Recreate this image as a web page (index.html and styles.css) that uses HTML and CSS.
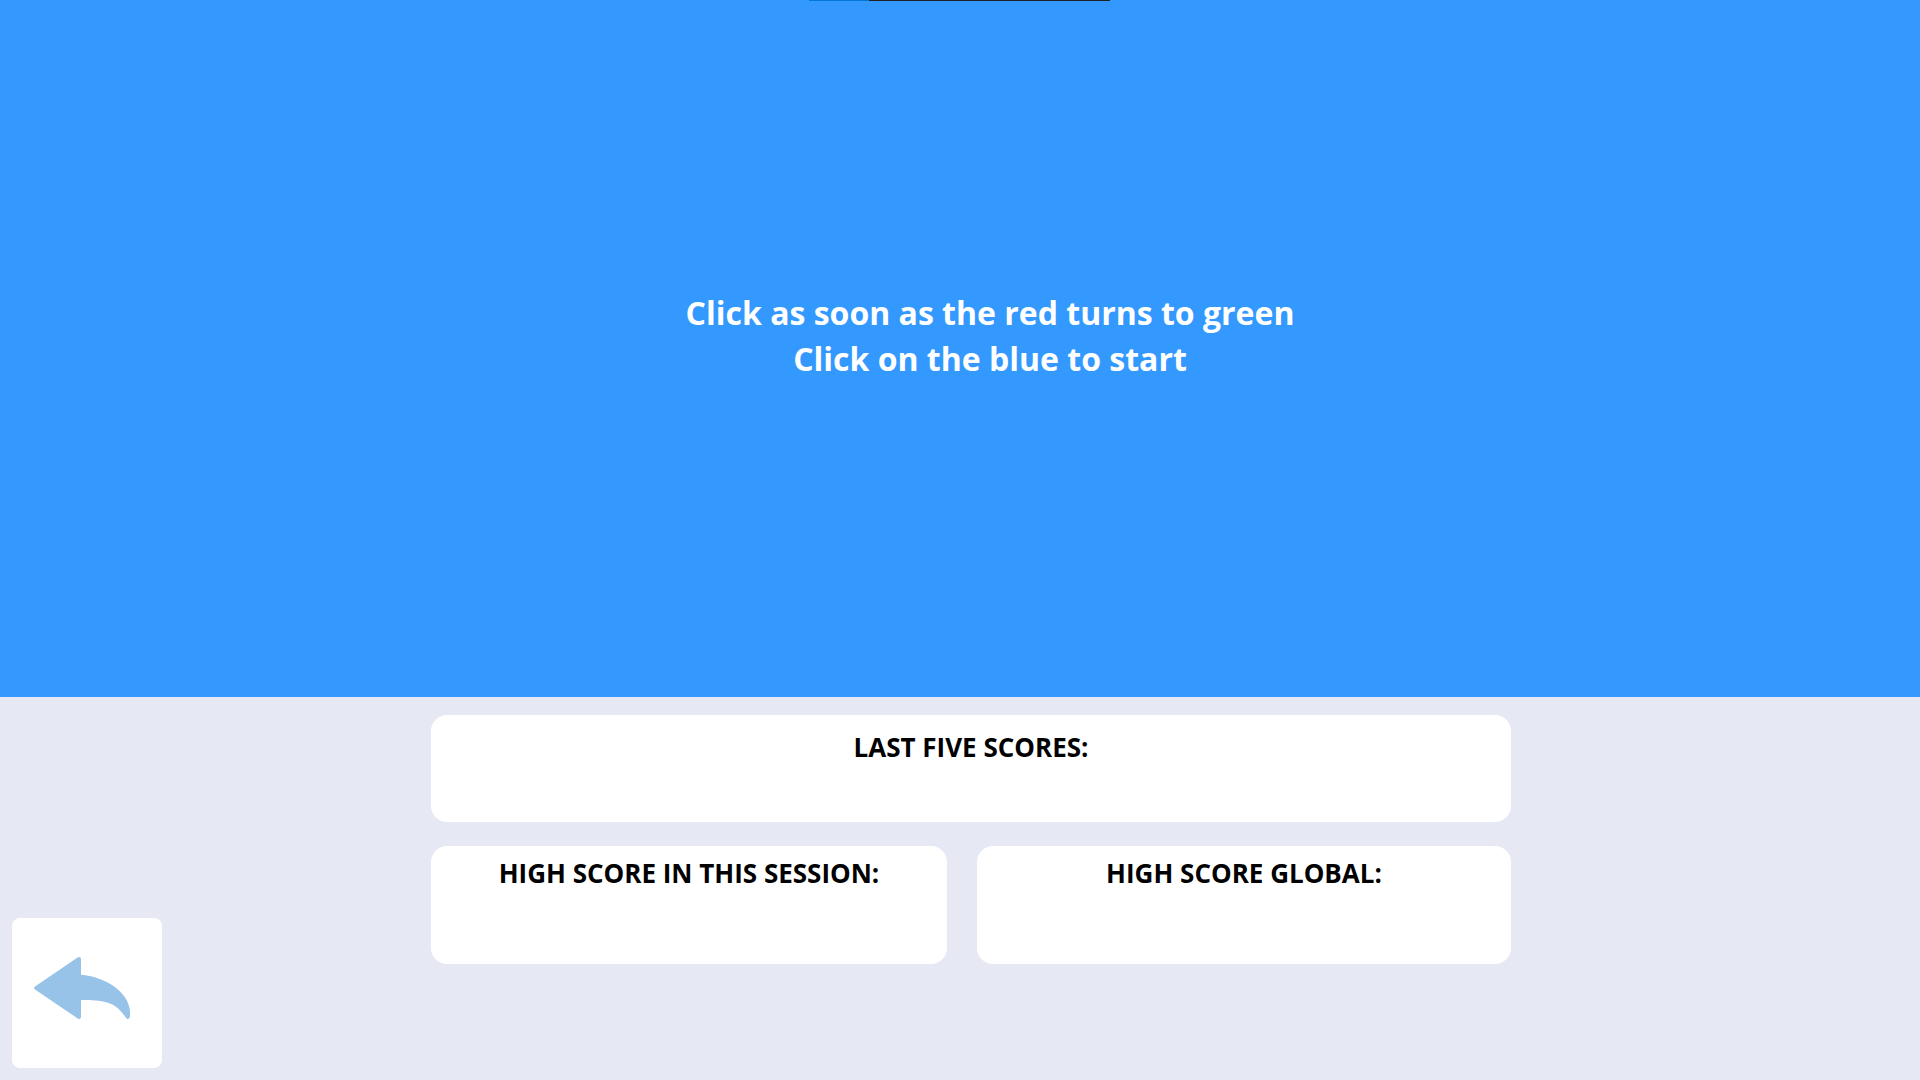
FILE: index.html
```html
<!DOCTYPE html>
<html lang="en">
<head>
<meta charset="utf-8">
<title>Reaction test</title>
<link rel="stylesheet" href="styles.css">
</head>
<body>
<main class="page">
  <button class="stage" type="button">
    <span class="top-edge"></span>
    <span class="prompt">Click as soon as the red turns to green<br>Click on the blue to start</span>
  </button>
  <section class="panel">
    <div class="side">
      <button class="back" type="button" aria-label="Back">
        <svg class="back-icon" viewBox="0 0 96 62" aria-hidden="true"><path d="M1 29.4 L43.6 .6 Q47 -1 47 2.5 V17.8 C72 20 98 36 96 59 Q95.6 62 93.6 62 Q92.4 62 91.4 60 C81 44 68 43 47 43 V59.5 Q47 63 43.6 61.4 L1 32.6 Q-1 31 1 29.4Z"/></svg>
      </button>
    </div>
    <div class="scores">
      <section class="card card-last"><h2>LAST FIVE SCORES:</h2></section>
      <section class="card"><h2>HIGH SCORE IN THIS SESSION:</h2></section>
      <section class="card"><h2>HIGH SCORE GLOBAL:</h2></section>
    </div>
  </section>
</main>
</body>
</html>
```
FILE: styles.css
```css
* { box-sizing: border-box; }
body { margin: 0; font-family: "Open Sans", "Noto Sans", sans-serif; }
.page { min-height: 100vh; display: grid; grid-template-rows: 1fr auto; background: #e6e8f4; }
.stage { position: relative; display: flex; align-items: center; justify-content: center; border: 0; padding: 0 0 26px 60px; background: #3399ff; color: #fff; font: 700 32px/46px "Open Sans", "Noto Sans", sans-serif; }
.top-edge { position: absolute; top: 0; left: calc(50% - 151px); width: 301px; height: 1px; background: linear-gradient(90deg, #0078d7 60px, #202020 60px); }
.panel { display: grid; grid-template-columns: 431px minmax(0, 1080px) 1fr; min-height: 383px; }
.side { display: flex; align-items: flex-end; padding: 12px; }
.back { display: grid; place-items: center; width: 150px; height: 150px; border: 0; border-radius: 8px; padding: 0 10px 10px 0; background: #fff; }
.back-icon { width: 96px; height: 62px; fill: #97c3e8; }
.scores { display: grid; grid-template-columns: 516fr 534fr; grid-template-rows: 107px 118px; gap: 24px 30px; align-content: start; padding-top: 18px; }
.card { border-radius: 16px; background: #fff; text-align: center; padding-top: 9px; }
.card-last { grid-column: 1 / -1; padding-top: 14px; }
h2 { margin: 0; font-size: 26px; line-height: 36px; font-weight: 700; color: #000; }
```
